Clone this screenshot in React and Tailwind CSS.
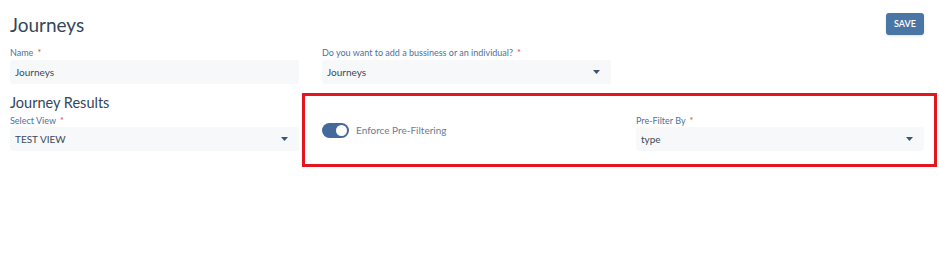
export default function App() {
    const label = "text-[9px] leading-[12px] text-[#4a72a0] font-normal";
    const star = "text-[#e0414b] ml-[4px]";

    const Caret = () => (
        <svg width="7" height="4" viewBox="0 0 7 4" className="shrink-0">
            <path d="M0 0 L7 0 L3.5 4 Z" fill="#3a5676" />
        </svg>
    );

    return (
        <div className="w-[939px] h-[263px] bg-white font-['Lato',sans-serif] text-[#3b4a5a] overflow-hidden">
            {/* Header */}
            <div className="flex items-start justify-between pl-[10px] pr-[15px] pt-[13px]">
                <h1 className="text-[19px] leading-[24px] text-[#34465a] font-normal">Journeys</h1>
                <button className="w-[38px] h-[22px] bg-[#4a76a6] text-white text-[9px] font-semibold rounded-[3px] shadow-sm">
                    SAVE
                </button>
            </div>

            {/* Name row */}
            <div className="flex gap-[23px] pl-[10px] mt-[10px]">
                <div className="w-[289px]">
                    <div className={label}>
                        Name<span className={star}>*</span>
                    </div>
                    <div className="mt-[1px] h-[24px] bg-[#f6f8fa] rounded-[3px] flex items-center px-[5px] text-[10px] text-[#3b4a5a]">
                        Journeys
                    </div>
                </div>
                <div className="w-[289px]">
                    <div className={label}>
                        Do you want to add a bussiness or an individual?<span className={star}>*</span>
                    </div>
                    <div className="mt-[1px] h-[24px] bg-[#f6f8fa] rounded-[3px] flex items-center justify-between pl-[5px] pr-[11px] text-[10px] text-[#3b4a5a]">
                        <span>Journeys</span>
                        <Caret />
                    </div>
                </div>
            </div>

            {/* Results row */}
            <div className="flex pl-[10px] mt-[9px]">
                <div className="w-[289px] pt-[1px]">
                    <div className="text-[14.5px] leading-[18px] text-[#34465a]">Journey Results</div>
                    <div className={`${label} mt-[3px]`}>
                        Select View<span className={star}>*</span>
                    </div>
                    <div className="h-[24px] bg-[#f6f8fa] rounded-[3px] flex items-center justify-between pl-[5px] pr-[11px] text-[10px] text-[#3b4a5a]">
                        <span>TEST VIEW</span>
                        <Caret />
                    </div>
                </div>
                <div className="ml-[3px] w-[635px] h-[74px] border-[3px] border-[#e3151d] flex items-start pl-[17px] pr-[10px]">
                    <div className="self-center flex items-center gap-[7px] w-[314px]">
                        <div className="w-[27px] h-[15px] rounded-full bg-[#44699a] relative">
                            <div className="absolute right-[2px] top-[2px] w-[11px] h-[11px] rounded-full bg-white" />
                        </div>
                        <span className="text-[10px] text-[#6b7d90]">Enforce Pre-Filtering</span>
                    </div>
                    <div className="flex-1 pt-[19px]">
                        <div className={label}>
                            Pre-Filter By<span className={star}>*</span>
                        </div>
                        <div className="h-[24px] bg-[#f6f8fa] rounded-[3px] flex items-center justify-between pl-[5px] pr-[11px] text-[10px] text-[#3b4a5a]">
                            <span>type</span>
                            <Caret />
                        </div>
                    </div>
                </div>
            </div>
        </div>
    );
}
